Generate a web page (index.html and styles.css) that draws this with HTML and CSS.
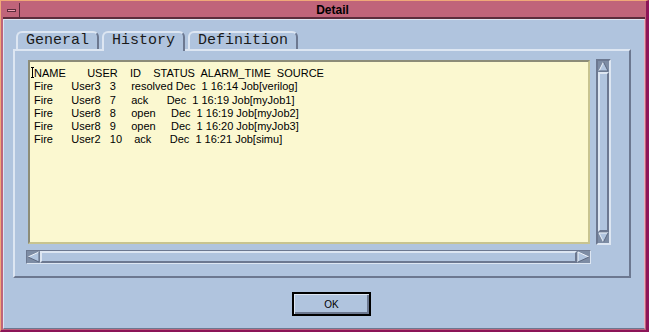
FILE: index.html
```html
<!DOCTYPE html>
<html lang="en">
<head>
    <meta charset="UTF-8">
    <title>Detail</title>
    <link rel="stylesheet" href="styles.css">
</head>
<body>
    <div class="frame">
        <div class="titlebar">
            <div class="menu-btn"><span class="dash"></span></div>
            <div class="title">Detail</div>
        </div>
        <div class="client">
            <div class="tabs">
                <div class="tab">General</div>
                <div class="tab active">History</div>
                <div class="tab">Definition</div>
            </div>
            <div class="panel">
                <div class="view-row">
                    <div class="textarea">
<pre class="history"><span class="caret"><svg width="3" height="11" viewBox="0 0 3 11"><path d="M0 0.5H3M1.5 0.5V10.5M0 10.5H3" stroke="#000" stroke-width="1" fill="none"/></svg></span>NAME       USER    ID    STATUS  ALARM_TIME  SOURCE
Fire      User3   3     resolved Dec  1 16:14 Job[verilog]
Fire      User8   7     ack      Dec  1 16:19 Job[myJob1]
Fire      User8   8     open     Dec  1 16:19 Job[myJob2]
Fire      User8   9     open     Dec  1 16:20 Job[myJob3]
Fire      User2   10    ack      Dec  1 16:21 Job[simu]</pre>
                    </div>
                    <div class="vscroll">
                        <div class="arrow">
                            <svg width="11" height="11" viewBox="0 0 11 11"><polygon points="5.5,1 1,10 10,10" fill="#b0c4de"/><path d="M5.5 1L1 10" stroke="#eef2f8" fill="none"/><path d="M5.5 1L10 10H1" stroke="#5c6880" fill="none"/></svg>
                        </div>
                        <div class="slider"></div>
                        <div class="arrow">
                            <svg width="11" height="11" viewBox="0 0 11 11"><polygon points="1,1 10,1 5.5,10" fill="#b0c4de"/><path d="M5.5 10L1 1H10" stroke="#eef2f8" fill="none"/><path d="M10 1L5.5 10" stroke="#5c6880" fill="none"/></svg>
                        </div>
                    </div>
                </div>
                <div class="hscroll">
                    <div class="arrow">
                        <svg width="13" height="12" viewBox="0 0 13 12"><polygon points="1,6 12,1 12,11" fill="#b0c4de"/><path d="M12 1L1 6" stroke="#eef2f8" fill="none"/><path d="M1 6L12 11V1" stroke="#5c6880" fill="none"/></svg>
                    </div>
                    <div class="slider"></div>
                    <div class="arrow">
                        <svg width="13" height="12" viewBox="0 0 13 12"><polygon points="1,1 12,6 1,11" fill="#b0c4de"/><path d="M1 11V1L12 6" stroke="#eef2f8" fill="none"/><path d="M12 6L1 11" stroke="#5c6880" fill="none"/></svg>
                    </div>
                </div>
            </div>
            <div class="actions">
                <button class="ok">OK</button>
            </div>
        </div>
    </div>
</body>
</html>
```

FILE: styles.css
```css
body {
    margin: 0;
    font-family: "Liberation Sans", Arial, sans-serif;
    background-color: #b0c4de;
}

.frame {
    width: 649px;
    height: 332px;
    box-sizing: border-box;
    background-color: #c0647a;
    border-top: 1px solid #f0a878;
    border-left: 1px solid #f0a878;
    border-right: 3px solid #8c1458;
    border-bottom: 2px solid #8c1458;
    padding: 2px 1px 1px 2px;
    display: flex;
    flex-direction: column;
}

.titlebar {
    height: 14px;
    display: flex;
    border-bottom: 2px solid #5c2c3c;
}

.menu-btn {
    width: 16px;
    border-right: 1px solid #5c2c3c;
    display: flex;
    align-items: center;
    justify-content: center;
}

.dash {
    width: 7px;
    height: 1px;
    background-color: #f0a0b4;
    border: 1px solid #5c2c3c;
}

.title {
    flex: 1;
    text-align: center;
    font-weight: bold;
    font-size: 12px;
    line-height: 14px;
    color: #000;
}

.client {
    flex: 1;
    background-color: #b0c4de;
    border-top: 1px solid #dde6f2;
    border-left: 1px solid #dde6f2;
    border-bottom: 1px solid #6c7890;
    border-right: 1px solid #e8b0c0;
    padding: 11px 0 0 9px;
    display: flex;
    flex-direction: column;
}

.tabs {
    display: flex;
    align-items: flex-end;
    gap: 3px;
    margin-left: 3px;
}

.tab {
    font-family: "Liberation Mono", "Courier New", monospace;
    font-size: 15px;
    line-height: 15px;
    height: 16px;
    box-sizing: content-box;
    padding: 0 8px;
    border: 2px solid #dde6f2;
    border-right-color: #6c7890;
    border-bottom: none;
    border-radius: 6px 6px 0 0;
    color: #1a1a1a;
}

.tab.active {
    position: relative;
    z-index: 1;
    height: 18px;
    margin-bottom: -2px;
    background-color: #b0c4de;
}

.panel {
    width: 618px;
    height: 229px;
    box-sizing: border-box;
    border: 2px solid;
    border-color: #dde6f2 #6c7890 #6c7890 #dde6f2;
    padding: 8px 0 0 11px;
}

.view-row {
    display: flex;
    align-items: flex-start;
}

.textarea {
    margin: 1px 0 0 2px;
    width: 562px;
    height: 184px;
    box-sizing: border-box;
    background-color: #fbf8d0;
    border: 2px solid;
    border-color: #8c8c78 #c8c490 #c8c490 #8c8c78;
    overflow: hidden;
}

.history {
    margin: 0;
    padding: 5px 0 0 4px;
    font-family: "Liberation Sans", Arial, sans-serif;
    font-size: 11px;
    line-height: 13.3px;
    color: #000;
}

.caret {
    display: inline-block;
    width: 3px;
    margin-left: -3px;
    vertical-align: -1px;
}

.caret svg {
    display: block;
}

.vscroll {
    margin-left: 6px;
    width: 15px;
    height: 186px;
    box-sizing: border-box;
    border: 2px solid;
    border-color: #6c7890 #dde6f2 #dde6f2 #6c7890;
    background-color: #7d8ca4;
    display: flex;
    flex-direction: column;
}

.vscroll .arrow {
    height: 11px;
}

.arrow svg {
    display: block;
}

.slider {
    flex: 1;
    background-color: #b0c4de;
    border: 2px solid;
    border-color: #dde6f2 #6c7890 #6c7890 #dde6f2;
}

.hscroll {
    margin-top: 5px;
    width: 565px;
    height: 14px;
    box-sizing: border-box;
    border: 1px solid;
    border-color: #6c7890 #dde6f2 #dde6f2 #6c7890;
    background-color: #7d8ca4;
    display: flex;
}

.hscroll .arrow {
    width: 13px;
}

.actions {
    display: flex;
    justify-content: center;
    margin-top: 14px;
    padding-left: 6px;
}

.ok {
    width: 79px;
    height: 24px;
    box-sizing: border-box;
    border: 2px solid #000;
    background-color: #b0c4de;
    box-shadow: inset 1px 1px 0 #dde6f2, inset -2px -2px 0 #6c7890;
    font-family: "Liberation Sans", Arial, sans-serif;
    font-size: 10px;
    color: #000;
    padding: 0;
}
```
